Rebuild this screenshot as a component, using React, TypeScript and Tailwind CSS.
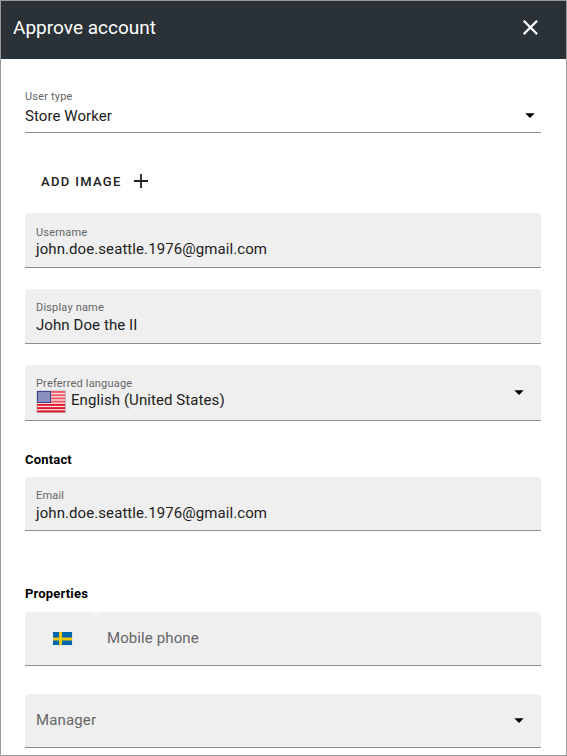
import type { ReactNode } from "react";

function Caret({ className = "" }: { className?: string }) {
  return (
    <svg className={`h-[5px] w-[10px] shrink-0 ${className}`} viewBox="0 0 10 5">
      <path d="M0.3 0.3h9.4L5 5z" fill="#000" />
    </svg>
  );
}

function Label({ children }: { children: ReactNode }) {
  return <div className="text-[11px] leading-4 tracking-[0.18px] text-[#666]">{children}</div>;
}

function Value({ children }: { children: ReactNode }) {
  return <div className="text-[15px] leading-[18px] tracking-[0.08px] text-[#212121]">{children}</div>;
}

function Field({ label, value, className = "" }: { label: string; value: string; className?: string }) {
  return (
    <div className={`rounded-t border-b border-[#8e8e8e] bg-[#efefef] px-[11px] ${className}`}>
      <Label>{label}</Label>
      <Value>{value}</Value>
    </div>
  );
}

function UsFlag() {
  return (
    <svg className="h-[23px] w-[30px] shrink-0" viewBox="0 0 30 23">
      <rect x="0.5" y="0.5" width="29.5" height="22.5" rx="1" fill="#b9b9b9" />
      <rect x="1" y="1" width="28" height="21" fill="#f9dfe1" />
      {[0, 1, 2, 3, 4, 5, 6].map((i) => (
        <rect key={i} x="1" y={1 + i * 3.23} width="28" height="1.9" fill={i < 4 ? "#ee5b68" : "#e0142a"} />
      ))}
      <rect x="1" y="1" width="14" height="12" fill="#3e4891" />
      <rect x="2" y="2" width="12" height="10" fill="#7d84b8" />
      {[3, 5, 7, 9, 11].map((y) => (
        <path key={y} d={`M2.5 ${y}H14`} stroke="#b6bad8" strokeWidth="0.8" strokeDasharray="1 1" />
      ))}
    </svg>
  );
}

function SwedenFlag() {
  return (
    <svg className="h-[14px] w-5" viewBox="0 0 20 14">
      <rect width="20" height="14" fill="#dfe7ee" />
      <rect width="19" height="13" fill="#0068aa" />
      <path d="M6 0h3v13H6zM0 5.5h19v3H0z" fill="#e5c11c" />
      <path d="M7 0h1v13H7zM0 6.2h19v1.4H0z" fill="#fecc00" />
    </svg>
  );
}

export default function App() {
  return (
    <div className="flex h-[756px] w-[567px] flex-col overflow-hidden border border-[#999] bg-white font-[Roboto,sans-serif]">
      <header className="flex h-[58px] shrink-0 items-start justify-between bg-[#2a3238] pl-[12px] pr-[28px] text-white">
        <h1 className="mt-[15px] text-[19px] leading-6 tracking-[0.02px]">Approve account</h1>
        <svg className="mt-[18px] h-4 w-4" viewBox="0 0 16 16">
          <path d="M1.7 1.7l13.4 13.4M15.1 1.7L1.7 15.1" stroke="#fff" strokeWidth="2.2" />
        </svg>
      </header>
      <main className="flex flex-col pl-6 pr-[25px]">
        <div className="flex h-[74px] items-end justify-between border-b border-[#8e8e8e] pb-[7px]">
          <div>
            <Label>User type</Label>
            <div className="mt-[2px]"><Value>Store Worker</Value></div>
          </div>
          <Caret className="mb-[7px] mr-[6px]" />
        </div>
        <button className="ml-4 mt-[38px] flex h-5 items-center self-start text-[13px] font-medium leading-5 tracking-[1.33px] text-[#212121]">
          <span className="mt-[2px]">ADD IMAGE</span>
          <svg className="ml-3 h-[14px] w-[14px]" viewBox="0 0 14 14">
            <path d="M7 0v14M0 7h14" stroke="#212121" strokeWidth="1.8" />
          </svg>
        </button>
        <Field className="mt-[22px] h-[55px] pt-[11px] [&>div:first-child]:pt-px [&>div:first-child]:leading-[15px]" label="Username" value="john.doe.seattle.1976@gmail.com" />
        <Field className="mt-[21px] h-[55px] pt-[11px]" label="Display name" value="John Doe the II" />
        <div className="mt-[21px] flex h-[56px] items-start justify-between rounded-t border-b border-[#8e8e8e] bg-[#efefef] pl-[11px] pr-[17px] pt-[11px]">
          <div>
            <Label>Preferred language</Label>
            <div className="-mt-[2px] flex items-start gap-[5px]">
              <UsFlag />
              <div className="mt-px"><Value>English (United States)</Value></div>
            </div>
          </div>
          <Caret className="mt-[14px]" />
        </div>
        <h2 className="mt-[31px] text-[13px] font-bold leading-4 tracking-[0.18px] text-black">Contact</h2>
        <Field className="mt-[9px] h-[54px] pt-[11px]" label="Email" value="john.doe.seattle.1976@gmail.com" />
        <h2 className="mt-[55px] text-[13px] font-bold leading-4 tracking-[0.18px] text-black">Properties</h2>
        <div className="mt-[10px] flex h-[54px] border-b border-[#8e8e8e]">
          <div className="flex w-[71px] items-center rounded-t bg-[#efefef] pl-7">
            <SwedenFlag />
          </div>
          <div className="flex flex-1 items-center rounded-t bg-[#efefef] pl-[11px] text-[15px] tracking-[0.1px] text-[#666]">Mobile phone</div>
        </div>
        <div className="mt-7 flex h-[54px] items-center justify-between rounded-t border-b border-[#8e8e8e] bg-[#efefef] pl-[11px] pr-[17px] text-[15px] tracking-[0.15px] text-[#666]">
          Manager
          <Caret />
        </div>
      </main>
    </div>
  );
}
